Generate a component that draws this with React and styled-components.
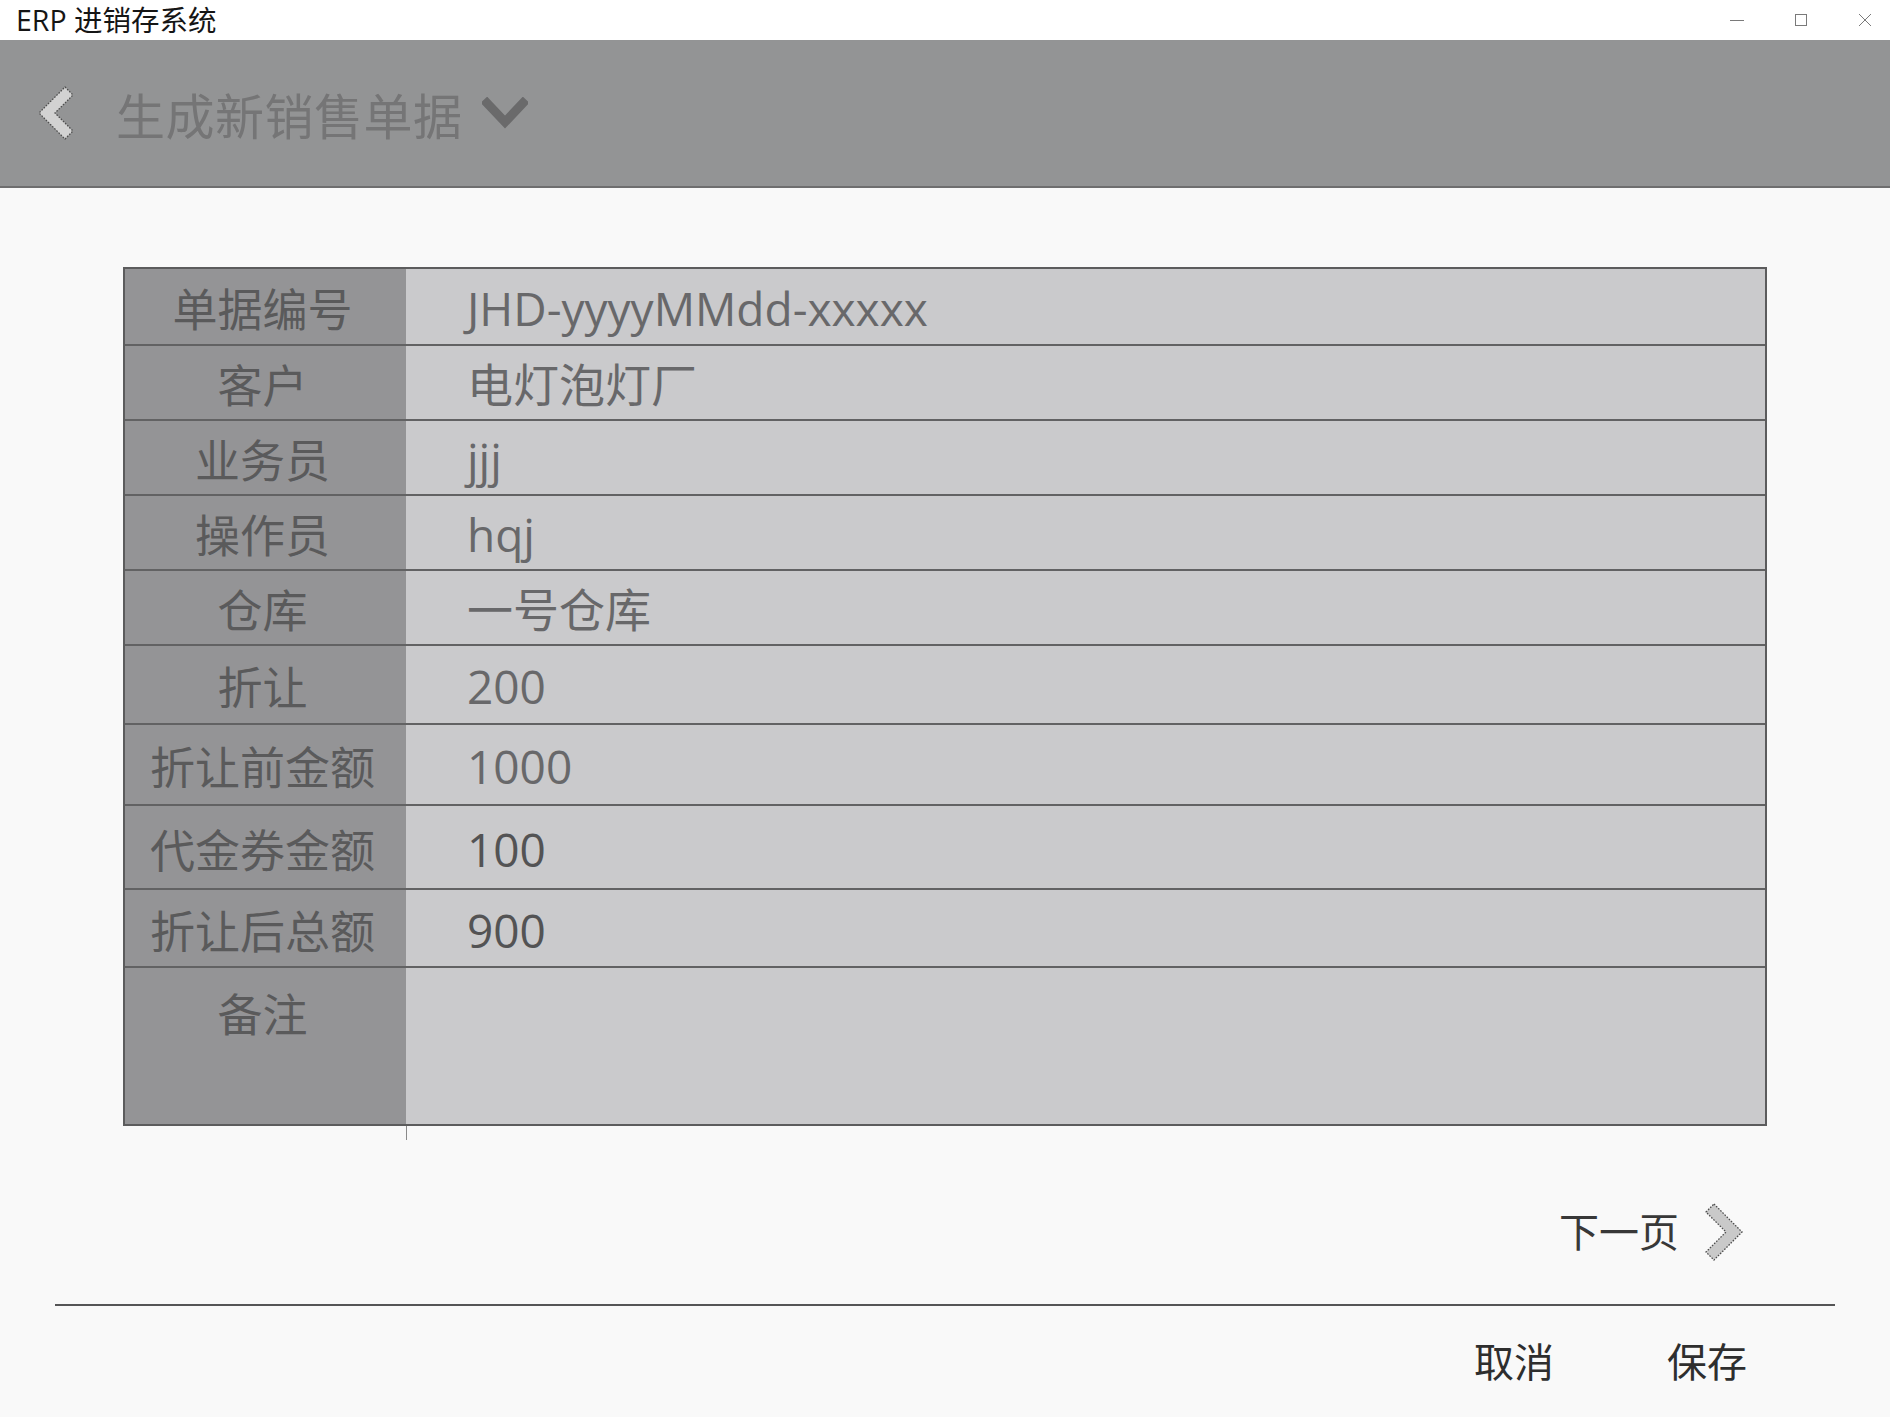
import styled, { createGlobalStyle } from 'styled-components';

const GlobalStyle = createGlobalStyle`
  html, body {
    margin: 0;
    padding: 0;
    background-color: #f9f9f9;
  }

  body {
    font-family: "Open Sans", "Noto Sans CJK SC", sans-serif;
  }
`;

const rows = [
  { label: '单据编号', value: 'JHD-yyyyMMdd-xxxxx', height: 75 },
  { label: '客户', value: '电灯泡灯厂', height: 75 },
  { label: '业务员', value: 'jjj', height: 75 },
  { label: '操作员', value: 'hqj', height: 75 },
  { label: '仓库', value: '一号仓库', height: 75 },
  { label: '折让', value: '200', height: 79 },
  { label: '折让前金额', value: '1000', height: 81 },
  { label: '代金券金额', value: '100', height: 84, strong: true },
  { label: '折让后总额', value: '900', height: 78, strong: true },
  { label: '备注', value: '', height: 158, top: true },
];

const StyledWindow = styled.div`
  display: flex;
  flex-direction: column;
  min-height: 100vh;
  background-color: #f9f9f9;
`;

const StyledTitleBar = styled.div`
  height: 40px;
  box-sizing: border-box;
  display: flex;
  align-items: center;
  justify-content: space-between;
  padding-left: 16px;
  background-color: #ffffff;
`;

const StyledAppName = styled.div`
  font-size: 28.5px;
  color: #151515;
  line-height: 40px;
`;

const StyledWindowControls = styled.div`
  display: flex;
  align-items: center;
  gap: 50px;
  padding-right: 18px;
  color: #7a7a7a;

  svg {
    display: block;
  }
`;

const StyledHeader = styled.div`
  height: 148px;
  box-sizing: border-box;
  display: flex;
  align-items: center;
  padding-left: 36px;
  background-color: #939495;
  border-bottom: 2px solid #6e6e6f;
`;

const StyledHeaderTitle = styled.h1`
  margin: 0 19px 0 40px;
  font-family: "Noto Sans CJK SC", sans-serif;
  font-size: 49px;
  font-weight: 400;
  color: #757576;
  letter-spacing: 0.5px;
  line-height: 1;
`;

const StyledContent = styled.div`
  display: flex;
  flex-direction: column;
  padding-top: 79px;
`;

const StyledTable = styled.div`
  margin-left: 123px;
  width: 1644px;
  border: 2px solid #5c5c5d;
  box-sizing: border-box;
`;

const StyledRow = styled.div`
  display: grid;
  grid-template-columns: 281px 1fr;
  height: ${({ $height }) => $height}px;
  box-sizing: border-box;

  & + & {
    border-top: 2px solid #626263;
  }
`;

const StyledLabel = styled.div`
  display: flex;
  justify-content: center;
  align-items: ${({ $top }) => ($top ? 'flex-start' : 'center')};
  padding-top: ${({ $top }) => ($top ? '22px' : '2px')};
  padding-right: 6px;
  background-color: #949496;
  font-family: "Noto Sans CJK SC", sans-serif;
  font-size: 45px;
  color: #5a5a5b;
  line-height: 1;
`;

const StyledValue = styled.div`
  display: flex;
  align-items: center;
  padding: 3px 0 0 61px;
  background-color: #cacacc;
  font-size: 46px;
  color: ${({ $strong }) => ($strong ? '#535354' : '#68686a')};
  line-height: 1;
`;

const StyledTick = styled.div`
  width: 1px;
  height: 14px;
  margin-left: 406px;
  background-color: #8a8a8a;
`;

const StyledNextRow = styled.div`
  display: flex;
  justify-content: flex-end;
  align-items: center;
  gap: 25px;
  height: 60px;
  margin-top: 62px;
  padding-right: 146px;
`;

const StyledNextText = styled.span`
  font-family: "Noto Sans CJK SC", sans-serif;
  font-size: 40px;
  color: #383838;
  line-height: 1;
  padding-bottom: 4px;
`;

const StyledDivider = styled.div`
  height: 2px;
  margin: 42px 55px 0 55px;
  background-color: #555556;
`;

const StyledActions = styled.div`
  display: flex;
  justify-content: flex-end;
  gap: 113px;
  margin-top: 29px;
  padding-right: 143px;
`;

const StyledActionButton = styled.button`
  border: none;
  background: none;
  padding: 0;
  font-family: "Noto Sans CJK SC", sans-serif;
  font-size: 40px;
  line-height: 50px;
  color: #2e2e2e;
  cursor: pointer;
`;

const BackIcon = () => (
  <svg width="40" height="56" viewBox="0 0 40 56">
    <polygon
      points="29,2 37,10 19,28 37,46 29,54 3,28"
      fill="#d2d2d2"
      stroke="#4e4e4e"
      strokeWidth="1.3"
      strokeDasharray="1.6 1.4"
    />
  </svg>
);

const NextIcon = () => (
  <svg width="40" height="60" viewBox="0 0 40 60">
    <polygon
      points="10,2 38,30 10,58 2,50 22,30 2,10"
      fill="#c9c9c9"
      stroke="#4e4e4e"
      strokeWidth="1.3"
      strokeDasharray="1.6 1.4"
    />
  </svg>
);

const DropdownIcon = () => (
  <svg width="46" height="32" viewBox="0 0 46 32">
    <polyline
      points="5,6 23,25 41,6"
      fill="none"
      stroke="#6a6a6b"
      strokeWidth="9"
      strokeLinecap="square"
    />
  </svg>
);

const App = () => {
  return (
    <>
      <GlobalStyle />
      <StyledWindow>
        <StyledTitleBar>
          <StyledAppName>ERP 进销存系统</StyledAppName>
          <StyledWindowControls>
            <svg width="14" height="14" viewBox="0 0 14 14">
              <line x1="0" y1="7.5" x2="14" y2="7.5" stroke="currentColor" strokeWidth="1" />
            </svg>
            <svg width="14" height="14" viewBox="0 0 14 14">
              <rect x="1.5" y="1.5" width="11" height="11" fill="none" stroke="currentColor" strokeWidth="1" />
            </svg>
            <svg width="14" height="14" viewBox="0 0 14 14">
              <path d="M1 1 L13 13 M13 1 L1 13" stroke="currentColor" strokeWidth="1" />
            </svg>
          </StyledWindowControls>
        </StyledTitleBar>

        <StyledHeader>
          <BackIcon />
          <StyledHeaderTitle>生成新销售单据</StyledHeaderTitle>
          <DropdownIcon />
        </StyledHeader>

        <StyledContent>
          <StyledTable>
            {rows.map(row => (
              <StyledRow key={`row_${row.label}`} $height={row.height}>
                <StyledLabel $top={row.top}>{row.label}</StyledLabel>
                <StyledValue $strong={row.strong}>{row.value}</StyledValue>
              </StyledRow>
            ))}
          </StyledTable>
          <StyledTick />

          <StyledNextRow>
            <StyledNextText>下一页</StyledNextText>
            <NextIcon />
          </StyledNextRow>

          <StyledDivider />

          <StyledActions>
            <StyledActionButton>取消</StyledActionButton>
            <StyledActionButton>保存</StyledActionButton>
          </StyledActions>
        </StyledContent>
      </StyledWindow>
    </>
  );
};

export default App;
